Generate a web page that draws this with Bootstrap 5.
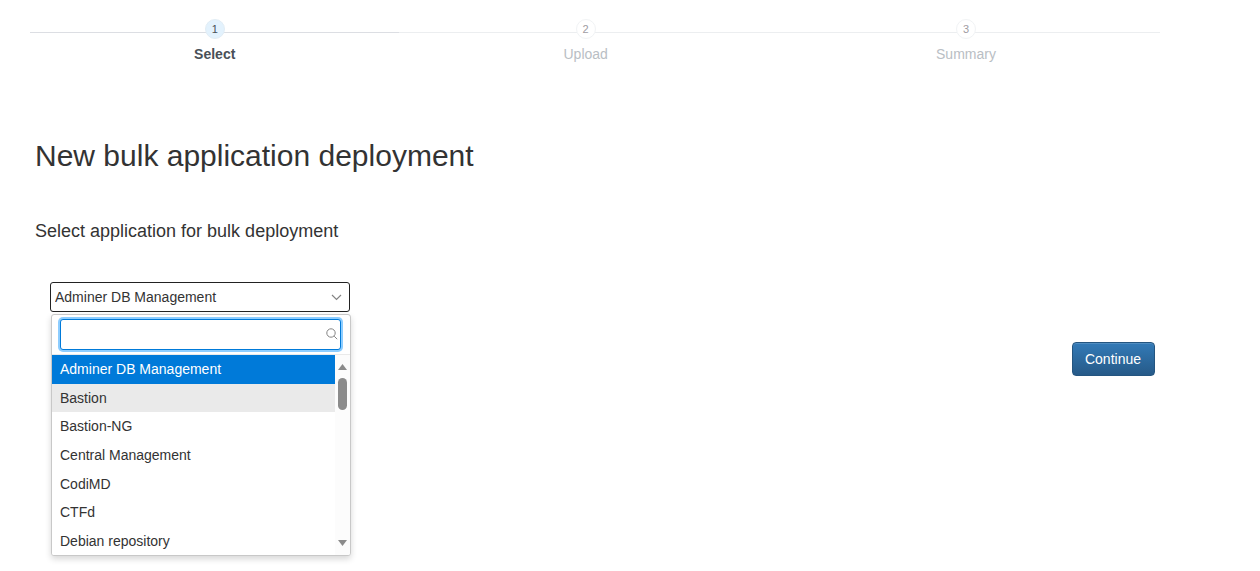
<!DOCTYPE html>
<html lang="en">
<head>
<meta charset="utf-8">
<meta name="viewport" content="width=device-width, initial-scale=1">
<title>New bulk application deployment</title>
<link href="https://cdn.jsdelivr.net/npm/bootstrap@5.3.0/dist/css/bootstrap.min.css" rel="stylesheet">
<style>
  body { font: 14px/20px "Liberation Sans", Arial, sans-serif; color: #333; background: #fff; }
  .wizard { padding: 19px 100px 16px 30px; }

  /* step indicator */
  .step { border: 0; color: #b9bec4; }
  .step-track { background: linear-gradient(#eceef0, #eceef0) 0 13px / 100% 1px no-repeat; }
  .step-number { width: 20px; height: 20px; border: 1px solid #f1f3f5; background: #fff; color: #a09ca2; font-size: 11px; }
  .step-name { margin-top: 5px; }
  .step.current { color: #495057; }
  .step.current .step-track { background-image: linear-gradient(#dcdee3, #dcdee3); }
  .step.current .step-number { background: #e3f2fd; border-color: #e2edf5; color: #495057; }

  .wizard-body { margin-top: 72px; padding: 0 5px; }
  .wizard-body h1 { font-size: 30px; line-height: 40px; font-weight: 400; margin: 0 0 44px; }
  .wizard-body h2 { font-size: 18px; line-height: 22px; font-weight: 400; margin: 0 0 40px; }

  /* application picker */
  .picker { width: 300px; margin-left: 15px; }
  .picker-field {
    display: block; width: 100%; height: 30px; padding: 0 24px 0 4px; appearance: none; outline: 0;
    border: 1px solid #222; border-radius: 3px; color: #333; font-size: 14px;
    background: #fff url("data:image/svg+xml,%3Csvg xmlns='http://www.w3.org/2000/svg' width='11' height='7' fill='none' stroke='%23848484' stroke-width='1.2'%3E%3Cpath d='M1 1l4.5 4.500L10 1'/%3E%3C/svg%3E") right 7px center no-repeat;
  }
  .picker-panel { top: 32px; left: 1px; width: 300px; border: 1px solid #c8c8c8; border-radius: 3px; background: #fff; box-shadow: 0 3px 6px rgba(0,0,0,.16); overflow: hidden; }
  .picker-search { padding: 4px 9px 4px 8px; border-bottom: 1px solid #eaeaea; }
  .picker-search input { width: 100%; height: 31px; padding: 4px 24px 4px 6px; border: 1px solid #007ad9; border-radius: 3px; box-shadow: 0 0 0 2px #8dcdff; outline: 0; }
  .picker-search svg { top: 13px; right: 12px; }
  .picker-list { height: 200px; }
  .picker-option { flex: 1 1 0; border: 0; background: #fff; color: #333; padding: 0 8px; text-align: left; }
  .picker-option.hovered { background: #eaeaea; }
  .picker-option.selected { background: #007ad9; color: #fff; }
  .picker-scroll { width: 15px; padding: 9px 0; background: #fcfcfc; }
  .picker-thumb { width: 9px; height: 32px; margin-top: 8px; border-radius: 5px; background: #8b8b8b; }

  .continue { height: 34px; margin-top: 30px; padding: 0 13px 0 12px; border: 1px solid #245580; border-radius: 4px; color: #fff; font-size: 14px; background: linear-gradient(#337ab7, #265a88); box-shadow: inset 0 1px 0 rgba(255,255,255,.15); }
</style>
</head>
<body>
<main class="wizard min-vh-100">
  <ol class="d-flex list-unstyled mb-0">
    <li class="step current flex-fill text-center fw-bold" aria-current="step">
      <div class="step-track d-flex justify-content-center"><span class="step-number rounded-circle d-flex align-items-center justify-content-center fw-normal">1</span></div>
      <div class="step-name">Select</div>
    </li>
    <li class="step flex-fill text-center">
      <div class="step-track d-flex justify-content-center"><span class="step-number rounded-circle d-flex align-items-center justify-content-center">2</span></div>
      <div class="step-name">Upload</div>
    </li>
    <li class="step flex-fill text-center">
      <div class="step-track d-flex justify-content-center"><span class="step-number rounded-circle d-flex align-items-center justify-content-center">3</span></div>
      <div class="step-name">Summary</div>
    </li>
  </ol>

  <section class="wizard-body">
    <h1>New bulk application deployment</h1>
    <h2 id="picker-title">Select application for bulk deployment</h2>

    <div class="picker position-relative">
      <select class="picker-field" aria-labelledby="picker-title">
        <option selected>Adminer DB Management</option>
        <option>Bastion</option>
        <option>Bastion-NG</option>
        <option>Central Management</option>
        <option>CodiMD</option>
        <option>CTFd</option>
        <option>Debian repository</option>
      </select>
      <div class="picker-panel position-absolute">
        <div class="picker-search position-relative">
          <input class="d-block" type="text" aria-label="Search applications">
          <svg class="position-absolute" width="12" height="12" viewBox="0 0 12 12" fill="none" stroke="#848484" aria-hidden="true"><circle cx="5" cy="5" r="4.2"/><path d="M8.2 8.2L11.2 11.2"/></svg>
        </div>
        <div class="picker-list d-flex">
          <div class="flex-grow-1 d-flex flex-column" role="listbox" aria-labelledby="picker-title">
            <button type="button" role="option" class="picker-option selected" aria-selected="true">Adminer DB Management</button>
            <button type="button" role="option" class="picker-option hovered">Bastion</button>
            <button type="button" role="option" class="picker-option">Bastion-NG</button>
            <button type="button" role="option" class="picker-option">Central Management</button>
            <button type="button" role="option" class="picker-option">CodiMD</button>
            <button type="button" role="option" class="picker-option">CTFd</button>
            <button type="button" role="option" class="picker-option">Debian repository</button>
          </div>
          <div class="picker-scroll d-flex flex-column align-items-center" aria-hidden="true">
            <svg width="9" height="6" viewBox="0 0 9 6"><path d="M4.5 0L9 6H0z" fill="#8b8b8b"/></svg>
            <div class="picker-thumb"></div>
            <svg class="mt-auto" width="9" height="6" viewBox="0 0 9 6"><path d="M0 0h9L4.5 6z" fill="#8b8b8b"/></svg>
          </div>
        </div>
      </div>
    </div>

    <div class="d-flex justify-content-end">
      <button type="button" class="continue">Continue</button>
    </div>
  </section>
</main>
<script src="https://cdn.jsdelivr.net/npm/bootstrap@5.3.0/dist/js/bootstrap.bundle.min.js"></script>
</body>
</html>
